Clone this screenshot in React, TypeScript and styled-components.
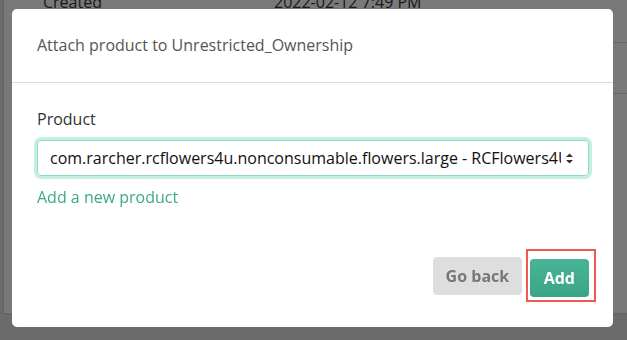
import styled, { createGlobalStyle } from 'styled-components'

const GlobalStyle = createGlobalStyle`
  html, body {
    margin: 0;
    padding: 0;
    background: #d6d6d6;
    font-family: "Open Sans", "Liberation Sans", sans-serif;
    overflow: hidden;
  }
`

export default function App() {
  return (
    <>
      <GlobalStyle />
      <Page>
        <DetailsCard>
          <DetailRow>
            <DetailKey>Created</DetailKey>
            <DetailValue>2022-02-12 7:49 PM</DetailValue>
          </DetailRow>
          <DetailRow>
            <DetailKey>Updated</DetailKey>
            <DetailValue>2022-02-12 7:49 PM</DetailValue>
          </DetailRow>
        </DetailsCard>
      </Page>

      <Overlay>
        <Modal>
          <ModalHeader>
            <Title>Attach product to Unrestricted_Ownership</Title>
          </ModalHeader>
          <ModalBody>
            <Label>Product</Label>
            <Select>
              <SelectText>
                com.rarcher.rcflowers4u.nonconsumable.flowers.large - RCFlowers4U Large
              </SelectText>
              <SortIcon />
            </Select>
            <Link>Add a new product</Link>
          </ModalBody>
          <ModalFooter>
            <Button>Go back</Button>
            <Highlight>
              <Button primary>Add</Button>
            </Highlight>
          </ModalFooter>
        </Modal>
      </Overlay>
    </>
  )
}

function SortIcon() {
  return (
    <Arrow width="9" height="13" viewBox="0 0 9 13">
      <path d="M4.5 1.5 L8 5 H1 Z" fill="#333" />
      <path d="M4.5 11.5 L8 8 H1 Z" fill="#333" />
    </Arrow>
  )
}

const Page = styled.div`
  height: 340px;
  padding-left: 3px;
  background: #d6d6d6;
`

const DetailsCard = styled.div`
  height: 322px;
  margin-top: -8px;
  background: #f2f2f2;
  border-left: 1px solid #c8c8c8;
  border-bottom: 1px solid #c8c8c8;
  box-sizing: border-box;
`

const DetailRow = styled.div`
  display: grid;
  grid-template-columns: 231px 1fr;
  padding-left: 19px;
  height: 50px;
  align-items: start;
  border-bottom: 1px solid #d0d0d0;
  margin-left: 20px;
`

const DetailKey = styled.span`
  font-size: 16px;
  line-height: 20px;
  color: #333;
`

const DetailValue = styled.span`
  font-size: 16px;
  line-height: 20px;
  color: #333;
`

const Overlay = styled.div`
  position: fixed;
  inset: 0;
  background: rgba(0, 0, 0, 0.5);
`

const Modal = styled.div`
  margin: 9px 0 0 12px;
  width: 601px;
  height: 318px;
  background: #fff;
  border-radius: 5px;
  display: flex;
  flex-direction: column;
`

const ModalHeader = styled.div`
  height: 73px;
  padding: 0 25px;
  display: flex;
  align-items: center;
  border-bottom: 1px solid #dcdcdc;
`

const Title = styled.h2`
  margin: 0 0 2px;
  font-size: 16px;
  font-weight: 400;
  color: #555;
`

const ModalBody = styled.div`
  padding: 25px 24px 0 25px;
  display: flex;
  flex-direction: column;
`

const Label = styled.label`
  font-size: 16px;
  line-height: 22px;
  color: #333;
  margin-bottom: 10px;
`

const Select = styled.div`
  box-sizing: border-box;
  height: 36px;
  border: 1px solid #8fdcc4;
  border-radius: 4px;
  box-shadow: 0 0 0 3px #c4efe2;
  display: flex;
  align-items: center;
  padding: 0 14px 0 12px;
  gap: 4px;
`

const SelectText = styled.span`
  flex: 1;
  overflow: hidden;
  white-space: nowrap;
  font-size: 16px;
  color: #111;
`

const Arrow = styled.svg`
  flex: none;
`

const Link = styled.a`
  margin-top: 10px;
  font-size: 16px;
  line-height: 22px;
  color: #3ea886;
  cursor: pointer;
`

const ModalFooter = styled.div`
  margin-top: auto;
  padding: 0 17px 25px 25px;
  display: flex;
  justify-content: flex-end;
  align-items: center;
  gap: 4px;
`

const Highlight = styled.div`
  border: 2px solid #ee5a4f;
  padding: 8px 5px 3px 2px;
`

const Button = styled.button<{ primary?: boolean }>`
  height: 38px;
  padding: 0 ${(p) => (p.primary ? '14px' : '12.5px')};
  border: none;
  border-radius: 4px;
  font-family: inherit;
  font-size: 16px;
  font-weight: 700;
  cursor: pointer;
  color: ${(p) => (p.primary ? '#fff' : '#777')};
  background: ${(p) => (p.primary ? 'linear-gradient(#48b497, #3aa585)' : '#dedede')};
`
